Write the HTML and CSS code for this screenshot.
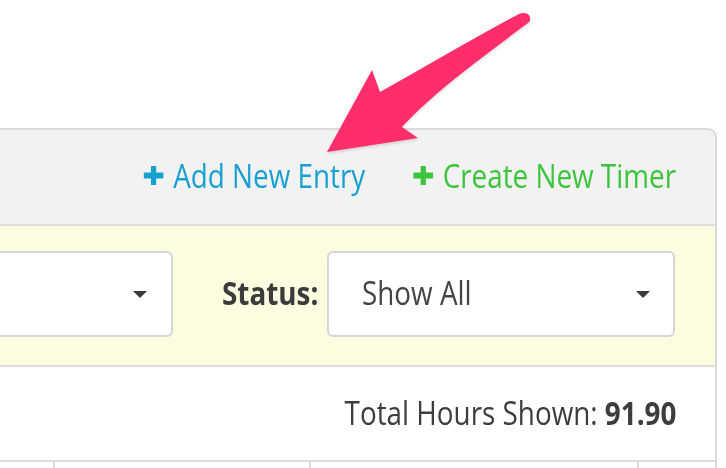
FILE: index.html
```html
<!DOCTYPE html>
<html>
<head>
<meta charset="utf-8">
<link rel="stylesheet" href="styles.css">
</head>
<body>
<div class="panel">
  <div class="header">
    <div class="header-links">
      <a class="link link-blue"><svg class="plus" viewBox="0 0 23 19"><path d="M11.5 0v19M0 9.5h23"/></svg>Add New Entry</a>
      <a class="link link-green"><svg class="plus" viewBox="0 0 23 19"><path d="M11.5 0v19M0 9.5h23"/></svg>Create New Timer</a>
    </div>
  </div>
  <div class="filters">
    <div class="select select-left"><span class="caret"></span></div>
    <label class="flabel"><span class="sq">Status:</span></label>
    <div class="select select-status"><span class="sel-text"><span class="sq">Show All</span></span><span class="caret"></span></div>
  </div>
  <div class="totals"><span class="totals-text">Total Hours Shown: <b>91.90</b></span></div>
  <div class="table-head">
    <div class="col c1"></div>
    <div class="col c2"></div>
    <div class="col c3"></div>
    <div class="col c4"></div>
  </div>
</div>
<svg class="arrow" viewBox="0 0 726 468" width="726" height="468">
  <defs>
    <filter id="sh" x="-20%" y="-20%" width="140%" height="140%">
      <feDropShadow dx="0" dy="1.5" stdDeviation="1.5" flood-color="#000" flood-opacity="0.16"/>
    </filter>
  </defs>
  <path filter="url(#sh)" fill="#fe2d6b" d="M519 14 C470 40 420 70 380 92 L372 70 L327 152 L418 138 L402 127 C432 94 482 57 528 23 C533 19 529 10 519 14 Z"/>
</svg>
</body>
</html>
```
FILE: styles.css
```css
html, body {
  margin: 0;
  padding: 0;
  background: #ffffff;
  overflow: hidden;
}
body {
  width: 726px;
  height: 468px;
  position: relative;
  font-family: "Open Sans", "DejaVu Sans", sans-serif;
}
.panel {
  margin: 128px 9px 0 -20px;
  border: 2px solid #dadada;
  border-bottom: none;
  border-radius: 0 9px 0 0;
  overflow: hidden;
}
.header {
  height: 96px;
  box-sizing: border-box;
  padding: 0 39px 2px 0;
  background: #f2f2f2;
  border-bottom: 2px solid #dedede;
  display: flex;
  justify-content: flex-end;
  align-items: center;
}
.header-links {
  display: flex;
  align-items: center;
  gap: 55px;
  flex: none;
  transform: scaleX(0.87);
  transform-origin: right center;
}
.link {
  display: flex;
  align-items: center;
  flex: none;
  font-size: 32px;
  line-height: 1;
  white-space: nowrap;
}
.link-blue { color: #19a0d3; }
.link-green { color: #3cc43d; }
.plus {
  display: block;
  flex: none;
  width: 23px;
  height: 19px;
  margin-right: 11px;
  margin-top: -2px;
  fill: none;
  stroke: currentColor;
  stroke-width: 6;
}
.filters {
  height: 141px;
  background: #fdfce1;
  border-bottom: 2px solid #dedede;
  display: flex;
  justify-content: flex-end;
  align-items: flex-start;
  padding: 25px 40px 0 0;
  box-sizing: border-box;
}
.select {
  height: 86px;
  box-sizing: border-box;
  background: #fff;
  border: 2px solid #d6d6d6;
  border-radius: 6px;
  display: flex;
  align-items: center;
}
.select-left {
  flex: 1 1 auto;
  min-width: 0;
  justify-content: flex-end;
  padding-right: 24px;
}
.flabel {
  flex: none;
  width: 96px;
  height: 86px;
  box-sizing: border-box;
  padding-bottom: 4px;
  margin-left: 49px;
  margin-right: 9px;
  display: flex;
  align-items: center;
  font-weight: bold;
  font-size: 32px;
  color: #3b3b3b;
  white-space: nowrap;
}
.sq {
  display: inline-block;
  transform: scaleX(0.87);
  transform-origin: left center;
}
.select-status {
  flex: none;
  width: 348px;
  padding: 0 23px 0 33px;
  justify-content: space-between;
}
.sel-text {
  width: 109px;
  padding-bottom: 4px;
  font-size: 32px;
  color: #444;
  white-space: nowrap;
}
.caret {
  flex: none;
  width: 0;
  height: 0;
  border-left: 7px solid transparent;
  border-right: 7px solid transparent;
  border-top: 7px solid #3a3a3a;
}
.totals {
  height: 95px;
  box-sizing: border-box;
  padding: 0 39px 3px 0;
  display: flex;
  justify-content: flex-end;
  align-items: center;
  border-bottom: 2px solid #dcdcdc;
}
.totals-text {
  display: inline-block;
  font-size: 32px;
  color: #3d3d3d;
  white-space: pre;
  transform: scaleX(0.87);
  transform-origin: right center;
}
.totals-text b { font-weight: bold; }
.table-head {
  display: flex;
  height: 20px;
}
.col { height: 20px; }
.c1 { width: 71px; border-right: 2px solid #dcdcdc; }
.c2 { width: 254px; border-right: 2px solid #dcdcdc; }
.c3 { width: 326px; border-right: 2px solid #dcdcdc; }
.c4 { flex: 1; }
.arrow {
  position: absolute;
  left: 0;
  top: 0;
  pointer-events: none;
}
```
